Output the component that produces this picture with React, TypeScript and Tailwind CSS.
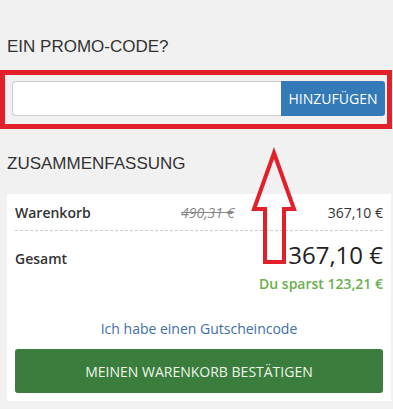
import React from 'react';

const App = () => {
  return (
    <div className="relative w-[393px] h-[409px] overflow-hidden bg-[#f1f1f1] font-['Open_Sans',sans-serif] text-[#333]">
      <h2 className="pl-[7px] pt-[37px] text-[17px] leading-[20px] font-['Liberation_Sans',Arial,sans-serif] text-[#333]">
        EIN PROMO-CODE?
      </h2>

      <div className="mt-[13px] w-[392px] border-[5px] border-[#e3202a] pl-[7px] pr-[2px] pt-[6px] pb-[8px]">
        <div className="flex h-[35px]">
          <input
            type="text"
            className="flex-1 min-w-0 h-full bg-white border border-[#ccc] border-r-0 rounded-l-[4px] px-3 text-[14px] outline-none"
          />
          <button className="h-full w-[104px] bg-[#337ab7] text-white text-[14px] rounded-r-[3px]">
            HINZUFÜGEN
          </button>
        </div>
      </div>

      <h2 className="pl-[7px] mt-[25px] text-[17px] leading-[20px] font-['Liberation_Sans',Arial,sans-serif] text-[#333]">
        ZUSAMMENFASSUNG
      </h2>

      <div className="ml-[7px] mt-[20px] w-[384px] bg-white px-[8px] pt-[8px] pb-[8px]">
        <div className="flex items-center h-[20px] text-[14px]">
          <span className="w-[166px] font-semibold">Warenkorb</span>
          <span className="italic line-through text-[#888]">490,31 €</span>
          <span className="ml-auto">367,10 €</span>
        </div>
        <div className="mt-[8px] border-t border-dashed border-[#ccc]" />

        <div className="mt-[8px] flex items-baseline justify-between">
          <span className="text-[14px] font-semibold">Gesamt</span>
          <span className="text-[24px] leading-[32px] font-medium text-[#222]">367,10 €</span>
        </div>
        <div className="mt-[4px] text-right text-[14px] leading-[18px] font-semibold text-[#6ab04c]">
          Du sparst 123,21 €
        </div>

        <div className="mt-[26px] text-center text-[14px] leading-[20px] text-[#3e6fa5]">
          Ich habe einen Gutscheincode
        </div>

        <button className="mt-[10px] w-full h-[44px] bg-[#3a7d3c] rounded-[3px] text-[14px] text-[#eef7ea]">
          MEINEN WARENKORB BESTÄTIGEN
        </button>
      </div>

      <svg
        className="absolute left-0 top-0 pointer-events-none"
        width="393"
        height="409"
        viewBox="0 0 393 409"
      >
        <polygon
          points="274,153 294,209 284,209 284,262 265,262 265,209 254,209"
          fill="none"
          stroke="#e3202a"
          strokeWidth="4"
          strokeLinejoin="miter"
        />
      </svg>
    </div>
  );
};

export default App;
